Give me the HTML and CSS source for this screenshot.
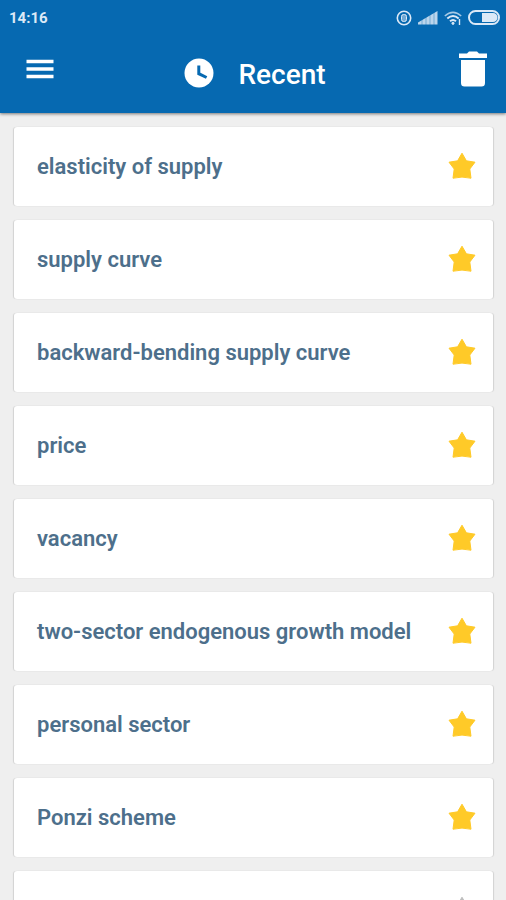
FILE: index.html
```html
<!DOCTYPE html>
<html lang="en">
<head>
<meta charset="utf-8">
<meta name="viewport" content="width=device-width, initial-scale=1">
<title>Recent</title>
<link rel="stylesheet" href="styles.css">
</head>
<body>
<svg class="defs" aria-hidden="true">
  <symbol id="star" viewBox="0 0 28 28"><path d="M14 1.2 18.4 8.8 27 10.2 21.8 17 23 26.2Q14 24 5 26.2L6.2 17 1 10.2 9.6 8.8Z" fill="currentColor" stroke="currentColor" stroke-linejoin="round"/></symbol>
</svg>
<header class="top">
  <div class="status">
    <time>14:16</time>
    <div class="indicators">
      <svg width="16" height="18" viewBox="0 0 16 18" fill="none" stroke="currentColor" aria-hidden="true"><circle cx="8" cy="9" r="6.7" stroke-width="1.6"/><rect x="5.5" y="5.5" width="5" height="7" rx="2" fill="currentColor" fill-opacity=".5"/></svg>
      <svg width="20" height="18" viewBox="0 0 20 18" aria-hidden="true"><path d="M0 15.5V13.5L19.5 2V15.5Z" fill="currentColor" opacity=".85"/><path d="M4 9v7M8 7v9M12 5v11M16 3v13" stroke="#0669b1" stroke-width=".4"/></svg>
      <svg width="18" height="18" viewBox="0 0 18 18" fill="none" stroke="currentColor" aria-hidden="true"><path d="M.8 7Q9-.2 17.2 7" stroke-width="1.5" opacity=".75"/><path d="M3.3 9.5Q9 4.6 14.7 9.5" stroke-width="2"/><path d="M6 12.2Q9 9.7 12 12.2" stroke-width="2"/><circle cx="9" cy="14.3" r="1.1" fill="currentColor"/><path d="M15.5 10v6" stroke-width="1.4"/></svg>
      <svg width="32" height="18" viewBox="0 0 32 18" aria-hidden="true"><rect x="1" y="2" width="30" height="13" rx="6.5" fill="none" stroke="currentColor" stroke-width="2"/><path d="M14 4H25a4.5 4.5 0 0 1 0 9H14Z" fill="currentColor"/></svg>
    </div>
  </div>
  <div class="toolbar">
    <button class="tool menu" type="button" aria-label="Menu"><svg width="28" height="20" viewBox="0 0 28 20" aria-hidden="true"><path d="M.5 2.5h27M.5 10h27M.5 17.5h27" stroke="currentColor" stroke-width="3.5"/></svg></button>
    <div class="heading">
      <svg width="30" height="30" viewBox="0 0 30 30" aria-hidden="true"><circle cx="15" cy="15" r="14.5" fill="currentColor"/><path d="M14.8 7.5V15.7L22.6 19.5" fill="none" stroke="#0669b1" stroke-width="3"/></svg>
      <h1>Recent</h1>
    </div>
    <button class="tool trash" type="button" aria-label="Delete all"><svg width="28" height="36" viewBox="0 0 28 36" fill="currentColor" aria-hidden="true"><path d="M0 2.5H8L10 .5H18L20 2.5H28V7H0ZM2 9H26V32Q26 35.5 22.5 35.5H5.5Q2 35.5 2 32Z"/></svg></button>
  </div>
</header>
<main>
  <ul class="list">
    <li class="card"><span>elasticity of supply</span><button class="star" type="button" aria-label="Favorite"><svg><use href="#star"/></svg></button></li>
    <li class="card"><span>supply curve</span><button class="star" type="button" aria-label="Favorite"><svg><use href="#star"/></svg></button></li>
    <li class="card"><span>backward-bending supply curve</span><button class="star" type="button" aria-label="Favorite"><svg><use href="#star"/></svg></button></li>
    <li class="card"><span>price</span><button class="star" type="button" aria-label="Favorite"><svg><use href="#star"/></svg></button></li>
    <li class="card"><span>vacancy</span><button class="star" type="button" aria-label="Favorite"><svg><use href="#star"/></svg></button></li>
    <li class="card"><span>two-sector endogenous growth model</span><button class="star" type="button" aria-label="Favorite"><svg><use href="#star"/></svg></button></li>
    <li class="card"><span>personal sector</span><button class="star" type="button" aria-label="Favorite"><svg><use href="#star"/></svg></button></li>
    <li class="card"><span>Ponzi scheme</span><button class="star" type="button" aria-label="Favorite"><svg><use href="#star"/></svg></button></li>
    <li class="card"><span></span><button class="star off" type="button" aria-label="Favorite"><svg><use href="#star"/></svg></button></li>
  </ul>
</main>
</body>
</html>
```
FILE: styles.css
```css
* { box-sizing: border-box; }

body {
  display: flex;
  flex-direction: column;
  height: 100vh;
  margin: 0;
  overflow: hidden;
  background: #efefef;
  font-family: Roboto, "Liberation Sans", sans-serif;
}

.defs {
  position: absolute;
  width: 0;
  height: 0;
}

svg { display: block; }

button {
  padding: 0;
  border: 0;
  background: none;
  color: inherit;
}

.top {
  position: relative;
  flex: none;
  padding-bottom: 16px;
  background: #0669b1;
  box-shadow: 0 1px 3px rgba(0, 0, 0, 0.5);
  color: #fff;
}

.status {
  display: flex;
  align-items: center;
  justify-content: space-between;
  height: 35px;
  padding: 0 6px 0 9px;
  color: #dce9f7;
  font-size: 15px;
  font-weight: 700;
}

.indicators {
  display: flex;
  gap: 6px;
}

.toolbar {
  display: grid;
  grid-template-columns: 1fr auto 1fr;
  align-items: center;
  height: 62px;
  padding: 0 19px 0 26px;
}

.tool { align-self: start; }

.menu {
  justify-self: start;
  padding-top: 24px;
}

.trash {
  justify-self: end;
  padding-top: 16px;
}

.heading {
  display: flex;
  align-items: center;
  gap: 24px;
  padding: 14px 3px 0 0;
}

h1 {
  margin: 0;
  padding-top: 4px;
  font-size: 28px;
  font-weight: 500;
  line-height: 36px;
}

main {
  flex: 1;
  min-height: 0;
  overflow: hidden;
  padding: 14px 13px 0 14px;
}

.list {
  display: grid;
  gap: 14px;
  margin: 0;
  padding: 0;
  list-style: none;
}

.card {
  display: flex;
  align-items: center;
  justify-content: space-between;
  height: 79px;
  padding: 0 17px 2px 23px;
  border-radius: 3px;
  background: #fff;
  box-shadow: 1px 0 1px rgba(0, 0, 0, 0.12), -1px 0 1px rgba(0, 0, 0, 0.12);
  color: #4d6f8b;
  font-size: 22px;
  font-weight: 600;
  line-height: 28px;
}

.card span { padding-top: 3px; }

.star { color: #ffca28; }

.star svg {
  width: 28px;
  height: 28px;
}

.off { color: #bdbdbd; }
```
